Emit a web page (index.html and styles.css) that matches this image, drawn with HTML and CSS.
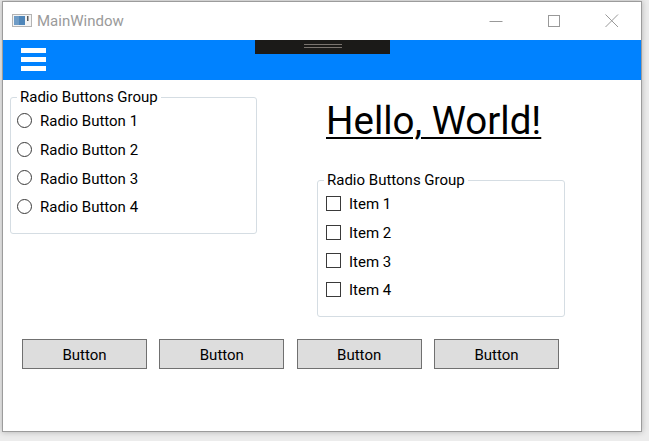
FILE: index.html
```html
<!DOCTYPE html>
<html>
<head>
<meta charset="utf-8">
<title>MainWindow</title>
<link rel="stylesheet" href="styles.css">
</head>
<body>
<div class="window">
  <div class="titlebar">
    <svg class="app-icon" width="20" height="13" viewBox="0 0 20 13">
      <rect x="0.5" y="0.5" width="19" height="12" fill="#f4f4f4" stroke="#b4b4b4"/>
      <rect x="2" y="2" width="11" height="9" fill="#4f86b9"/>
      <rect x="2" y="2" width="5" height="9" fill="#6f9cc6"/>
      <rect x="15" y="2" width="1.5" height="5" fill="#5a5a5a"/>
    </svg>
    <span class="title">MainWindow</span>
    <div class="controls">
      <div class="ctl"><svg width="14" height="14" viewBox="0 0 14 14"><line x1="0.5" y1="7.5" x2="13.5" y2="7.5" stroke="#999" stroke-width="1"/></svg></div>
      <div class="ctl"><svg width="13" height="13" viewBox="0 0 13 13"><rect x="0.5" y="0.5" width="11" height="11" fill="none" stroke="#999" stroke-width="1"/></svg></div>
      <div class="ctl"><svg width="14" height="14" viewBox="0 0 14 14"><path d="M0.5 0.5 L13 13 M13 0.5 L0.5 13" stroke="#999" stroke-width="1" fill="none"/></svg></div>
    </div>
  </div>
  <div class="appbar">
    <div class="hamburger"><span></span><span></span><span></span></div>
    <div class="devtools"><span></span><span></span></div>
  </div>
  <div class="main">
    <div class="cols">
      <fieldset class="group group-left">
        <legend>Radio Buttons Group</legend>
        <div class="row"><span class="radio"></span><span class="label">Radio Button 1</span></div>
        <div class="row"><span class="radio"></span><span class="label">Radio Button 2</span></div>
        <div class="row"><span class="radio"></span><span class="label">Radio Button 3</span></div>
        <div class="row"><span class="radio"></span><span class="label">Radio Button 4</span></div>
      </fieldset>
      <div class="right">
        <div class="hello">Hello, World!</div>
        <fieldset class="group group-right">
          <legend>Radio Buttons Group</legend>
          <div class="row"><span class="check"></span><span class="label">Item 1</span></div>
          <div class="row"><span class="check"></span><span class="label">Item 2</span></div>
          <div class="row"><span class="check"></span><span class="label">Item 3</span></div>
          <div class="row"><span class="check"></span><span class="label">Item 4</span></div>
        </fieldset>
      </div>
    </div>
    <div class="buttons">
      <button class="btn">Button</button>
      <button class="btn">Button</button>
      <button class="btn">Button</button>
      <button class="btn">Button</button>
    </div>
  </div>
</div>
</body>
</html>
```

FILE: styles.css
```css
html, body {
  margin: 0;
  padding: 0;
}
body {
  background: #ececec;
  width: 649px;
  height: 441px;
  overflow: hidden;
  font-family: Roboto, "Liberation Sans", sans-serif;
  font-size: 15px;
  color: #000;
}
.window {
  box-sizing: border-box;
  margin: 1px 0 0 2px;
  width: 640px;
  height: 431px;
  background: #fff;
  border: 1px solid #9c9c9c;
  box-shadow: 0 0 6px rgba(0, 0, 0, 0.25);
  display: flex;
  flex-direction: column;
}
.titlebar {
  height: 38px;
  display: flex;
  align-items: center;
  background: #fff;
}
.app-icon {
  margin-left: 9px;
  margin-top: -1px;
  display: block;
}
.title {
  margin-left: 5px;
  color: #9a9a9a;
  font-size: 15px;
  line-height: 18px;
}
.controls {
  margin-left: auto;
  display: flex;
  height: 100%;
}
.ctl {
  width: 58px;
  height: 100%;
  display: flex;
  align-items: center;
  justify-content: center;
}
.ctl svg {
  display: block;
}
.appbar {
  position: relative;
  height: 40px;
  background: #0082ff;
}
.hamburger {
  display: flex;
  flex-direction: column;
  gap: 4px;
  padding: 8px 0 0 18px;
  width: 25px;
}
.hamburger span {
  display: block;
  height: 5px;
  background: #fff;
}
.devtools {
  position: absolute;
  left: 252px;
  top: 0;
  width: 135px;
  height: 14px;
  background: #1b1a18;
  display: flex;
  flex-direction: column;
  align-items: center;
  padding-top: 4px;
  box-sizing: border-box;
  gap: 2px;
}
.devtools span {
  display: block;
  width: 38px;
  height: 1px;
  background: #7a746f;
}
.main {
  padding: 8px 0 0 7px;
}
.cols {
  display: flex;
  gap: 60px;
  align-items: flex-start;
}
.group {
  box-sizing: border-box;
  margin: 0;
  border: 1px solid #d5dde3;
  border-radius: 3px;
  padding: 0 0 12px 6px;
  min-width: 0;
}
.group legend {
  padding: 0 3px;
  line-height: 18px;
  font-size: 15px;
}
.group-left {
  width: 247px;
}
.group-right {
  width: 248px;
  margin-top: 28px;
}
.row {
  height: 28.7px;
  display: flex;
  align-items: center;
  line-height: 18px;
}
.label {
  padding-top: 2px;
}
.radio {
  box-sizing: border-box;
  width: 15px;
  height: 15px;
  border: 1px solid #3a3a3a;
  border-radius: 50%;
  margin-right: 8px;
  background: #fff;
}
.check {
  box-sizing: border-box;
  width: 15px;
  height: 15px;
  border: 1px solid #3a3a3a;
  margin-left: 2px;
  margin-right: 8px;
  background: #fff;
}
.right {
  display: flex;
  flex-direction: column;
}
.hello {
  margin: 10px 0 0 9px;
  font-size: 38.5px;
  line-height: 45px;
  text-decoration: underline;
  text-decoration-thickness: 2px;
  text-underline-offset: 3px;
}
.buttons {
  display: flex;
  gap: 12.33px;
  margin-top: 22px;
  padding-left: 12px;
}
.btn {
  box-sizing: border-box;
  width: 125px;
  height: 30px;
  margin: 0;
  padding: 2px 0 0;
  background: #dddddd;
  border: 1px solid #707070;
  border-radius: 0;
  font-family: Roboto, "Liberation Sans", sans-serif;
  font-size: 15px;
  color: #000;
}
```
